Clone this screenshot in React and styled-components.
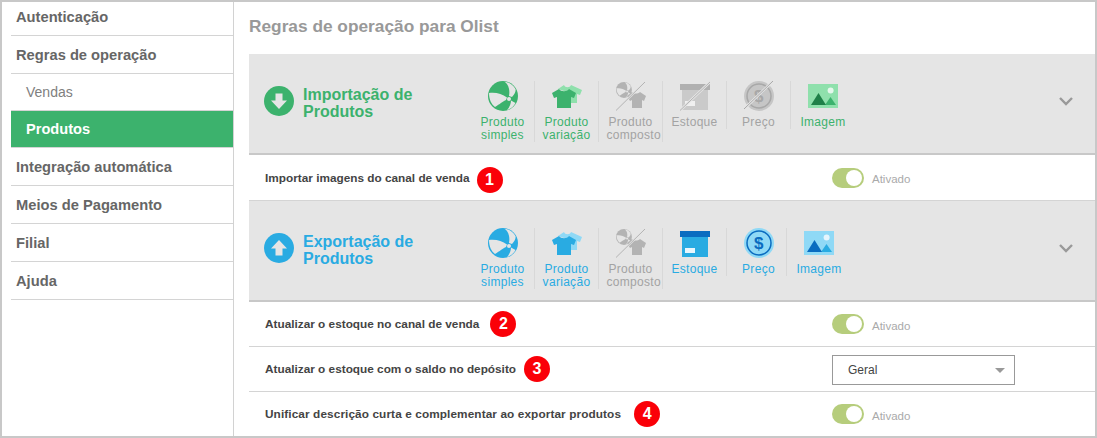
import React from "react";
import styled, { createGlobalStyle } from "styled-components";

const GREEN = "#3cb26d";
const GREEN_LIGHT = "#8fe0ac";
const GREEN_DARK = "#1f8048";
const BLUE = "#29abe2";
const BLUE_LIGHT = "#8fd9f6";
const BLUE_DARK = "#0a6cc0";
const GRAY = "#b3b3b3";
const HEADER_BG = "#e5e5e5";
const DISABLED = "#a3a3a3";

const GlobalStyle = createGlobalStyle`
  html, body {
    margin: 0;
    padding: 0;
    background: #fff;
    overflow: hidden;
  }
  * {
    box-sizing: border-box;
  }
`;

const Frame = styled.div`
  width: 1097px;
  height: 438px;
  display: flex;
  border: 2px solid #c8c8c8;
  font-family: "Liberation Sans", Arial, sans-serif;
  overflow: hidden;
`;

const Sidebar = styled.nav`
  width: 232px;
  flex-shrink: 0;
  padding-left: 9px;
  border-right: 1px solid #d2d2d2;
`;

const NavItem = styled.div`
  height: 38px;
  padding-left: 5px;
  padding-top: 10px;
  border-bottom: 1px solid #d4d4d4;
  font-size: 14.7px;
  line-height: 18px;
  font-weight: bold;
  color: #666;
  &:first-child {
    height: 34px;
    padding-top: 6px;
  }
`;

const SubItem = styled.div`
  height: 37px;
  padding-left: 15px;
  padding-top: 10px;
  border-bottom: 1px solid #d4d4d4;
  font-size: ${(p) => (p.$active ? "14.6px" : "14px")};
  line-height: 17px;
  color: ${(p) => (p.$active ? "#fff" : "#808080")};
  font-weight: ${(p) => (p.$active ? "bold" : "normal")};
  background: ${(p) => (p.$active ? GREEN : "transparent")};
`;

const Main = styled.main`
  flex: 1;
  padding-left: 15px;
  min-width: 0;
`;

const PageTitle = styled.h1`
  margin: 0;
  height: 52px;
  padding-top: 15px;
  font-size: 17.3px;
  line-height: 18px;
  font-weight: bold;
  color: #999;
`;

const SectionHeader = styled.div`
  height: 101px;
  display: flex;
  background: ${HEADER_BG};
  border-bottom: 2px solid #c8c8c8;
  padding-left: 15px;
  padding-top: 32px;
  position: relative;
`;

const HeadIcon = styled.svg`
  width: 30px;
  height: 30px;
  flex-shrink: 0;
`;

const SectionTitle = styled.div`
  width: 177px;
  height: 34px;
  padding-left: 9px;
  font-size: 16px;
  line-height: 17px;
  font-weight: bold;
  color: ${(p) => p.$color};
`;

const Tabs = styled.div`
  display: flex;
  align-items: flex-start;
  margin-top: -5px;
`;

const Tab = styled.div`
  width: ${(p) => p.$width || 64}px;
  padding-left: ${(p) => p.$shift || 0}px;
  border-right: ${(p) => (p.$last ? "none" : "1px solid #d8d8d8")};
  display: flex;
  flex-direction: column;
  align-items: center;
  font-size: 12px;
  line-height: 13px;
  letter-spacing: 0.3px;
  color: ${(p) => p.$color};
`;

const TabIcon = styled.svg`
  width: 30px;
  height: 30px;
  margin-bottom: 5px;
`;

// fixed width: a label that is too long runs out to the right, as "composto" does
const TabLabel = styled.span`
  display: block;
  width: 48px;
  text-align: center;
  white-space: nowrap;
`;

const Chevron = styled.svg`
  position: absolute;
  left: 809px;
  top: 42px;
  width: 16px;
  height: 10px;
`;

const Row = styled.div`
  height: ${(p) => p.$height || 45}px;
  display: flex;
  align-items: center;
  border-bottom: ${(p) => (p.$plain ? "none" : "1px solid #d4d4d4")};
  padding-left: 16px;
`;

const RowLabel = styled.div`
  width: 567px;
  display: flex;
  align-items: center;
  font-size: 11.8px;
  letter-spacing: ${(p) => p.$track || 0}px;
  font-weight: bold;
  color: #444;
`;

const Badge = styled.span`
  width: 26px;
  height: 26px;
  margin-left: ${(p) => p.$gap}px;
  transform: translateY(${(p) => p.$drop || 0}px);
  border-radius: 50%;
  background: #fa0008;
  color: #fff;
  font-size: 16px;
  letter-spacing: 0;
  font-weight: bold;
  display: flex;
  align-items: center;
  justify-content: center;
`;

const ToggleWrap = styled.div`
  display: flex;
  align-items: center;
  gap: 8px;
`;

const ToggleText = styled.span`
  margin-top: 3px;
  font-size: 11.5px;
  color: #aaa;
`;

const ToggleTrack = styled.span`
  width: 32px;
  height: 20px;
  border-radius: 10px;
  background: #b6cd7c;
  display: flex;
  align-items: center;
  justify-content: flex-end;
  padding-right: 2px;
`;

const ToggleKnob = styled.span`
  width: 16px;
  height: 16px;
  border-radius: 50%;
  background: #fff;
`;

const SelectBox = styled.div`
  width: 183px;
  height: 30px;
  margin-top: 2px;
  border: 1px solid #999;
  display: flex;
  align-items: center;
  justify-content: space-between;
  padding: 0 9px 0 15px;
  font-size: 12px;
  color: #444;
`;

const Caret = styled.span`
  width: 0;
  height: 0;
  border-left: 5px solid transparent;
  border-right: 5px solid transparent;
  border-top: 5px solid #999;
`;

const ArrowCircle = ({ color, up }) => (
  <HeadIcon viewBox="0 0 30 30">
    <circle cx="15" cy="15" r="15" fill={color} />
    <path
      d="M11.5 7.5h7v7H23L15 23 7 14.5h4.5z"
      fill={HEADER_BG}
      transform={up ? "rotate(180 15 15)" : undefined}
    />
  </HeadIcon>
);

const BallShape = ({ color }) => (
  <>
    <circle cx="15" cy="15" r="15" fill={color} />
    <path d="M1 12C8 11 14 13 19 16.5L18 19C14 21 9 25 7 26 3 23 1 18 1 12z" fill={HEADER_BG} />
    <path d="M17 1C21 4 22 10 21 15L24 16C27 13 28 10 27.5 8 25 4 21 1 17 1z" fill={HEADER_BG} />
    <path d="M23 19.5C23 23 21 27 19 29 23 28 26 25 27.5 22z" fill={HEADER_BG} />
    <circle cx="21" cy="18" r="2" fill={HEADER_BG} />
  </>
);

const Ball = ({ color }) => (
  <TabIcon viewBox="0 0 30 30">
    <BallShape color={color} />
  </TabIcon>
);

const Shirts = ({ color, light }) => (
  <TabIcon viewBox="0 0 30 30">
    <path d="M6 8l6-4c1 3 6 3 7 0l11 5-2 5-3-1v9H18V12z" fill={light} />
    <path d="M0 12L7 8C9 11 15 11 17 8L24 12 22 17 19 16V27H5V16L2 17z" fill={color} />
  </TabIcon>
);

const Composite = ({ color }) => (
  <TabIcon viewBox="0 0 30 30">
    <g transform="translate(0 1) scale(0.53)">
      <BallShape color={color} />
    </g>
    <path d="M11 15l5-4c1 2 6 2 8 0l6 4-2 5-2-1v8H16v-8l-2 1z" fill={color} />
    <path d="M0 29.5L29 1" stroke={HEADER_BG} strokeWidth="2" />
    <path d="M0 29.5L29 1" stroke={color} strokeWidth="1" />
  </TabIcon>
);

const Box = ({ color, top, blocked }) => (
  <TabIcon viewBox="0 0 30 30">
    <rect x="0" y="3" width="30" height="6" fill={top} />
    <rect x="2" y="9" width="26" height="20" fill={color} />
    <rect x="5" y="20" width="10" height="5" fill={blocked ? "#f0f0f0" : "#e8f6fd"} />
    {blocked && <path d="M0 29.5L30 1" stroke={HEADER_BG} strokeWidth="2.5" />}
    {blocked && <path d="M0 29.5L30 1" stroke={GRAY} strokeWidth="1" />}
  </TabIcon>
);

const Coin = ({ ring, inner, blocked }) => (
  <TabIcon viewBox="0 0 30 30">
    <circle cx="15" cy="15" r="15" fill={ring} />
    <circle cx="15" cy="15" r="12" fill="none" stroke={inner} strokeWidth="1.5" />
    <text
      x="15"
      y="21"
      textAnchor="middle"
      fontFamily="Liberation Sans, Arial, sans-serif"
      fontWeight="bold"
      fontSize="17"
      fill={inner}
    >
      $
    </text>
    {blocked && <path d="M0 28L29 0" stroke={HEADER_BG} strokeWidth="2.5" />}
    {blocked && <path d="M0 28L29 0" stroke={inner} strokeWidth="1" />}
  </TabIcon>
);

const Picture = ({ light, back, front, dot }) => (
  <TabIcon viewBox="0 0 30 30">
    <rect x="0" y="3" width="30" height="24" fill={light} />
    <path d="M17 24l5.5-8 5.5 8z" fill={back} />
    <path d="M3 24l7.5-12L18 24z" fill={front} />
    <circle cx="22.6" cy="9.6" r="3" fill={dot} />
  </TabIcon>
);

const Lines = ({ lines }) =>
  lines.map((line) => <TabLabel key={line}>{line}</TabLabel>);

const ChevronDown = () => (
  <Chevron viewBox="0 0 16 10">
    <path d="M2 2l6 6 6-6" fill="none" stroke="#999" strokeWidth="2.4" />
  </Chevron>
);

const Toggle = () => (
  <ToggleWrap>
    <ToggleTrack>
      <ToggleKnob />
    </ToggleTrack>
    <ToggleText>Ativado</ToggleText>
  </ToggleWrap>
);

function App() {
  return (
    <>
      <GlobalStyle />
      <Frame>
        <Sidebar>
          <NavItem>Autenticação</NavItem>
          <NavItem>Regras de operação</NavItem>
          <SubItem>Vendas</SubItem>
          <SubItem $active>Produtos</SubItem>
          <NavItem>Integração automática</NavItem>
          <NavItem>Meios de Pagamento</NavItem>
          <NavItem>Filial</NavItem>
          <NavItem>Ajuda</NavItem>
        </Sidebar>
        <Main>
          <PageTitle>Regras de operação para Olist</PageTitle>

          <SectionHeader>
            <ArrowCircle color={GREEN} />
            <SectionTitle $color={GREEN}>Importação de Produtos</SectionTitle>
            <Tabs>
              <Tab $color={GREEN}>
                <Ball color={GREEN} />
                <Lines lines={["Produto", "simples"]} />
              </Tab>
              <Tab $color={GREEN}>
                <Shirts color={GREEN} light={GREEN_LIGHT} />
                <Lines lines={["Produto", "variação"]} />
              </Tab>
              <Tab $color={DISABLED}>
                <Composite color={GRAY} />
                <Lines lines={["Produto", "composto"]} />
              </Tab>
              <Tab $color={DISABLED}>
                <Box color="#cacaca" top="#b0b0b0" blocked />
                <Lines lines={["Estoque"]} />
              </Tab>
              <Tab $color={DISABLED}>
                <Coin ring="#c6c6c6" inner="#a8a8a8" blocked />
                <Lines lines={["Preço"]} />
              </Tab>
              <Tab $color={GREEN} $last>
                <Picture light={GREEN_LIGHT} back={GREEN} front={GREEN_DARK} dot="#e5f7ec" />
                <Lines lines={["Imagem"]} />
              </Tab>
            </Tabs>
            <ChevronDown />
          </SectionHeader>

          <Row $height={46}>
            <RowLabel>
              Importar imagens do canal de venda
              <Badge $gap={7} $drop={2}>1</Badge>
            </RowLabel>
            <Toggle />
          </Row>

          <SectionHeader>
            <ArrowCircle color={BLUE} up />
            <SectionTitle $color={BLUE}>Exportação de Produtos</SectionTitle>
            <Tabs>
              <Tab $color={BLUE}>
                <Ball color={BLUE} />
                <Lines lines={["Produto", "simples"]} />
              </Tab>
              <Tab $color={BLUE}>
                <Shirts color={BLUE} light={BLUE_LIGHT} />
                <Lines lines={["Produto", "variação"]} />
              </Tab>
              <Tab $color={DISABLED}>
                <Composite color={GRAY} />
                <Lines lines={["Produto", "composto"]} />
              </Tab>
              <Tab $color={BLUE}>
                <Box color={BLUE} top={BLUE_DARK} />
                <Lines lines={["Estoque"]} />
              </Tab>
              <Tab $color={BLUE} $width={60} $shift={4}>
                <Coin ring={BLUE_LIGHT} inner={BLUE_DARK} />
                <Lines lines={["Preço"]} />
              </Tab>
              <Tab $color={BLUE} $last>
                <Picture light={BLUE_LIGHT} back={BLUE} front={BLUE_DARK} dot="#e5f5fd" />
                <Lines lines={["Imagem"]} />
              </Tab>
            </Tabs>
            <ChevronDown />
          </SectionHeader>

          <Row>
            <RowLabel>
              Atualizar o estoque no canal de venda
              <Badge $gap={11}>2</Badge>
            </RowLabel>
            <Toggle />
          </Row>
          <Row>
            <RowLabel>
              Atualizar o estoque com o saldo no depósito
              <Badge $gap={8}>3</Badge>
            </RowLabel>
            <SelectBox>
              Geral
              <Caret />
            </SelectBox>
          </Row>
          <Row $plain $height={44}>
            <RowLabel $track={0.1}>
              Unificar descrição curta e complementar ao exportar produtos
              <Badge $gap={13}>4</Badge>
            </RowLabel>
            <Toggle />
          </Row>
        </Main>
      </Frame>
    </>
  );
}

export default App;
